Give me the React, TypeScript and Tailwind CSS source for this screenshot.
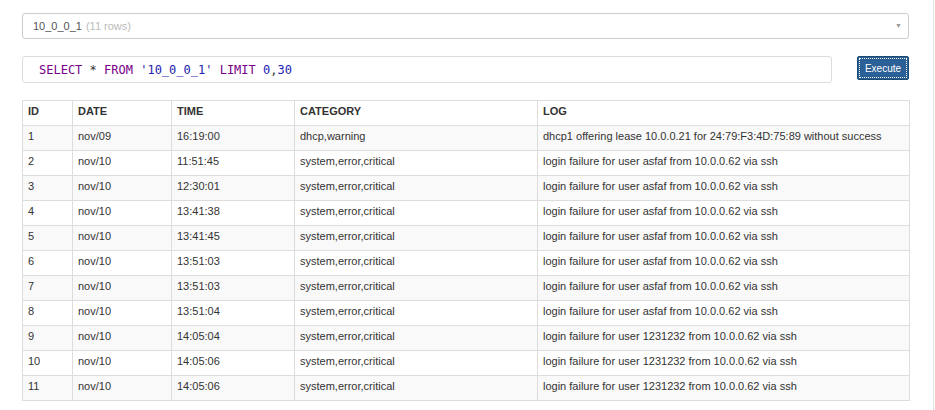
const rows = [
  ["1", "nov/09", "16:19:00", "dhcp,warning", "dhcp1 offering lease 10.0.0.21 for 24:79:F3:4D:75:89 without success"],
  ["2", "nov/10", "11:51:45", "system,error,critical", "login failure for user asfaf from 10.0.0.62 via ssh"],
  ["3", "nov/10", "12:30:01", "system,error,critical", "login failure for user asfaf from 10.0.0.62 via ssh"],
  ["4", "nov/10", "13:41:38", "system,error,critical", "login failure for user asfaf from 10.0.0.62 via ssh"],
  ["5", "nov/10", "13:41:45", "system,error,critical", "login failure for user asfaf from 10.0.0.62 via ssh"],
  ["6", "nov/10", "13:51:03", "system,error,critical", "login failure for user asfaf from 10.0.0.62 via ssh"],
  ["7", "nov/10", "13:51:03", "system,error,critical", "login failure for user asfaf from 10.0.0.62 via ssh"],
  ["8", "nov/10", "13:51:04", "system,error,critical", "login failure for user asfaf from 10.0.0.62 via ssh"],
  ["9", "nov/10", "14:05:04", "system,error,critical", "login failure for user 1231232 from 10.0.0.62 via ssh"],
  ["10", "nov/10", "14:05:06", "system,error,critical", "login failure for user 1231232 from 10.0.0.62 via ssh"],
  ["11", "nov/10", "14:05:06", "system,error,critical", "login failure for user 1231232 from 10.0.0.62 via ssh"],
];

const cols = [
  { label: "ID", w: "w-[50px]" },
  { label: "DATE", w: "w-[99px]" },
  { label: "TIME", w: "w-[123px]" },
  { label: "CATEGORY", w: "w-[243px]" },
  { label: "LOG", w: "w-[372px]" },
];

export default function App() {
  return (
    <div className="w-[935px] h-[410px] bg-white overflow-hidden font-['Liberation_Sans',Arial,sans-serif] text-[#333]">
      <div className="w-[934px] h-full border-r border-[#e0e0e0] pl-[22px] pr-[24px] pt-[13px]">
        {/* table picker */}
        <div className="h-[26px] border border-[#ccc] rounded-[3px] flex items-center pl-[10px] pr-[6px] text-[11px]">
          <span className="text-[#555]">10_0_0_1</span>
          <span className="ml-[4px] text-[#bbb]">(11 rows)</span>
          <span className="ml-auto text-[7px] text-[#999]">▼</span>
        </div>

        {/* query row */}
        <div className="flex items-start mt-[17px] gap-[25px]">
          <div className="flex-1 h-[27px] border border-[#ddd] rounded-[3px] flex items-center pl-[16px] font-['DejaVu_Sans_Mono',monospace] text-[12px] whitespace-pre">
            <span className="text-[#770088]">SELECT</span>
            <span className="text-[#333]"> * </span>
            <span className="text-[#770088]">FROM</span>
            <span> </span>
            <span className="text-[#2222aa]">'10_0_0_1'</span>
            <span> </span>
            <span className="text-[#770088]">LIMIT</span>
            <span> </span>
            <span className="text-[#1a1ab8]">0</span>
            <span className="text-[#333]">,</span>
            <span className="text-[#1a1ab8]">30</span>
          </div>
          <button className="w-[52px] h-[24px] bg-[#2a6096] border border-[#1d4a73] rounded-[2px] text-white text-[10px] outline-1 outline-dotted outline-white -outline-offset-3">
            Execute
          </button>
        </div>

        {/* results */}
        <table className="mt-[17px] w-[887px] table-fixed border-collapse text-[11px]">
          <thead>
            <tr className="h-[25px]">
              {cols.map((c) => (
                <th key={c.label} className={`${c.w} border border-[#ddd] px-[5px] pb-[4px] text-left font-bold text-[#333]`}>
                  {c.label}
                </th>
              ))}
            </tr>
          </thead>
          <tbody>
            {rows.map((r, i) => (
              <tr key={r[0]} className={`h-[25px] ${i % 2 === 0 ? "bg-[#f9f9f9]" : "bg-white"}`}>
                {r.map((cell, j) => (
                  <td key={j} className="border border-[#ddd] px-[5px] pb-[3px] whitespace-nowrap overflow-hidden">
                    {cell}
                  </td>
                ))}
              </tr>
            ))}
          </tbody>
        </table>
      </div>
    </div>
  );
}
